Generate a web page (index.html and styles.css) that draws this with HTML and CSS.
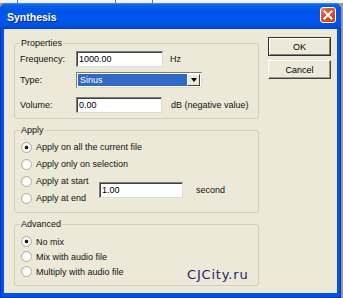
FILE: index.html
```html
<!DOCTYPE html>
<html lang="en">
<head>
    <meta charset="UTF-8">
    <title>Synthesis</title>
    <link rel="stylesheet" href="styles.css">
</head>
<body>
    <div class="desk"><span class="seg1"></span><span class="seg2"></span><span class="seg3"></span></div>
    <div class="window">
        <div class="titlebar">
            <span class="title">Synthesis</span>
            <button class="close" aria-label="Close">
                <svg width="10" height="10" viewBox="0 0 10 10"><path d="M1.5 1.5 L8.5 8.5 M8.5 1.5 L1.5 8.5" stroke="#fff" stroke-width="2" stroke-linecap="square"/></svg>
            </button>
        </div>
        <div class="client">
            <div class="groups">
                <fieldset class="group props">
                    <legend>Properties</legend>
                    <div class="row row-freq">
                        <label>Frequency:</label>
                        <input class="edit edit-freq" value="1000.00">
                        <span class="unit">Hz</span>
                    </div>
                    <div class="row row-type">
                        <label>Type:</label>
                        <div class="combo">
                            <span class="combo-value">Sinus</span>
                            <span class="combo-arrow"><i></i></span>
                        </div>
                    </div>
                    <div class="row row-vol">
                        <label>Volume:</label>
                        <input class="edit edit-vol" value="0.00">
                        <span class="unit unit-db">dB (negative value)</span>
                    </div>
                </fieldset>

                <fieldset class="group apply">
                    <legend>Apply</legend>
                    <div class="opts">
                        <label class="opt"><input type="radio" name="apply" checked>Apply on all the current file</label>
                        <label class="opt"><input type="radio" name="apply">Apply only on selection</label>
                        <div class="pair">
                            <div class="pair-opts">
                                <label class="opt"><input type="radio" name="apply">Apply at start</label>
                                <label class="opt"><input type="radio" name="apply">Apply at end</label>
                            </div>
                            <input class="edit edit-sec" value="1.00">
                            <span class="unit unit-sec">second</span>
                        </div>
                    </div>
                </fieldset>

                <fieldset class="group advanced">
                    <legend>Advanced</legend>
                    <div class="opts">
                        <label class="opt"><input type="radio" name="mix" checked>No mix</label>
                        <label class="opt"><input type="radio" name="mix">Mix with audio file</label>
                        <label class="opt"><input type="radio" name="mix">Multiply with audio file</label>
                    </div>
                </fieldset>
            </div>

            <div class="buttons">
                <button class="btn btn-default">OK</button>
                <button class="btn">Cancel</button>
            </div>

            <div class="watermark">CJCity.ru</div>
        </div>
    </div>
</body>
</html>
```

FILE: styles.css
```css
* {
    box-sizing: border-box;
}
body {
    margin: 0;
    width: 343px;
    height: 298px;
    overflow: hidden;
    background: #9a9a9a;
    font-family: "Liberation Sans", Arial, sans-serif;
    font-size: 9px;
    color: #000;
}
.desk {
    display: flex;
    height: 3px;
    background: #f2f2f2;
}
.desk span {
    border-right: 1px solid #777;
}
.seg1 { width: 18px; }
.seg2 { width: 98px; }
.seg3 { width: 37px; }

.window {
    width: 341px;
    height: 295px;
    display: flex;
    flex-direction: column;
    background: #0055e6;
    border-radius: 7px 7px 0 0;
    box-shadow: inset 1px 0 0 #0831b0, inset -1px 0 0 #0831b0, inset 0 -1px 0 #0831b0;
}
.titlebar {
    height: 26px;
    display: flex;
    align-items: center;
    padding: 0 5px 0 7px;
    border-radius: 7px 7px 0 0;
    background: linear-gradient(#3d8ff8 0, #0a5fec 2px, #0054e6 8px, #0058ee 60%, #004fdf 90%, #0040c8 100%);
}
.title {
    color: #fff;
    font-weight: bold;
    font-size: 10.5px;
    text-shadow: 1px 1px 0 #0a2a8a;
    margin-top: 2px;
}
.close {
    margin-left: auto;
    margin-top: -2px;
    width: 16px;
    height: 16px;
    padding: 0;
    border: 1px solid #fff;
    border-radius: 3px;
    background: linear-gradient(135deg, #f08a6a 0, #e0552e 35%, #c83c18 100%);
    display: flex;
    align-items: center;
    justify-content: center;
}
.close svg {
    display: block;
}

.client {
    position: relative;
    flex: 1;
    margin: 0 4px 5px;
    background: #ece9d8;
    display: flex;
    align-items: flex-start;
    padding: 8px 0 0 10px;
}
.groups {
    width: 245px;
    padding-top: 1px;
    display: flex;
    flex-direction: column;
    gap: 6px;
}
.group {
    margin: 0;
    min-width: 0;
    padding: 0 0 0 5px;
    border: 1px solid #d0d0bf;
    border-radius: 3px;
}
.group legend {
    padding: 0 1px;
    line-height: 11px;
    color: #111;
}

.props {
    padding-bottom: 5px;
}
.row {
    display: flex;
    align-items: center;
    height: 16px;
    color: #111;
}
.row label {
    width: 56px;
}
.row-freq { margin-top: 2px; }
.row-type { margin-top: 5px; }
.row-vol { margin-top: 9px; }

.edit {
    height: 16px;
    margin: 0;
    padding: 0 2px;
    font: inherit;
    color: #000;
    background: #fff;
    border: 1px solid;
    border-color: #7c7c7c #dcdcdc #dcdcdc #7c7c7c;
    box-shadow: inset 1px 1px 0 #404040;
    outline: none;
}
.edit-freq { width: 87px; }
.edit-vol { width: 86px; }
.edit-sec { width: 84px; }
.unit {
    margin-left: 7px;
}
.unit-db {
    margin-left: 9px;
}
.unit-sec {
    margin-left: 13px;
}

.combo {
    display: flex;
    width: 126px;
    height: 16px;
    padding: 1px;
    background: #fff;
    border: 1px solid;
    border-color: #7c7c7c #dcdcdc #dcdcdc #7c7c7c;
}
.combo-value {
    flex: 1;
    background: #316ac5;
    color: #fff;
    padding-left: 2px;
    line-height: 12px;
}
.combo-arrow {
    width: 13px;
    display: flex;
    align-items: center;
    justify-content: center;
    background: #ece9d8;
    border: 1px solid;
    border-color: #fff #404040 #404040 #fff;
}
.combo-arrow i {
    width: 0;
    height: 0;
    border-left: 3.5px solid transparent;
    border-right: 3.5px solid transparent;
    border-top: 4px solid #000;
}

.opts {
    display: flex;
    flex-direction: column;
    color: #111;
}
.apply {
    padding-bottom: 6px;
}
.apply .opts {
    padding-top: 3px;
    gap: 1px;
}
.apply .opt {
    height: 16px;
}
.advanced {
    padding-bottom: 6px;
}
.advanced .opts {
    padding-top: 4px;
}
.advanced .opt {
    height: 15px;
}
.opt {
    display: flex;
    align-items: center;
}
.opt input {
    appearance: none;
    width: 11px;
    height: 11px;
    margin: 0 4px 0 1px;
    border: 1px solid #b0ada2;
    border-radius: 50%;
    background: radial-gradient(circle at 60% 60%, #fff 0, #fff 45%, #e2dfd4 100%);
}
.opt input:checked {
    background: radial-gradient(circle, #222 0, #222 1.6px, #fff 2.2px, #fff 45%, #e2dfd4 100%);
}
.pair {
    display: flex;
    align-items: center;
}
.pair-opts {
    width: 79px;
    display: flex;
    flex-direction: column;
    gap: 1px;
}

.buttons {
    margin-left: 9px;
    display: flex;
    flex-direction: column;
    gap: 4px;
}
.btn {
    width: 63px;
    height: 19px;
    padding: 0;
    font: inherit;
    color: #000;
    background: #ece9d8;
    border: 1px solid;
    border-color: #fff #404040 #404040 #fff;
    box-shadow: inset -1px -1px 0 #9a9890;
}
.btn-default {
    border: 1px solid #303030;
    box-shadow: inset 1px 1px 0 #fff, inset -1px -1px 0 #808080;
}

.watermark {
    position: absolute;
    left: 183px;
    top: 238px;
    font-family: "DejaVu Sans", sans-serif;
    font-size: 13px;
    line-height: 15px;
    letter-spacing: 0.8px;
    color: #1e1e64;
}
```
